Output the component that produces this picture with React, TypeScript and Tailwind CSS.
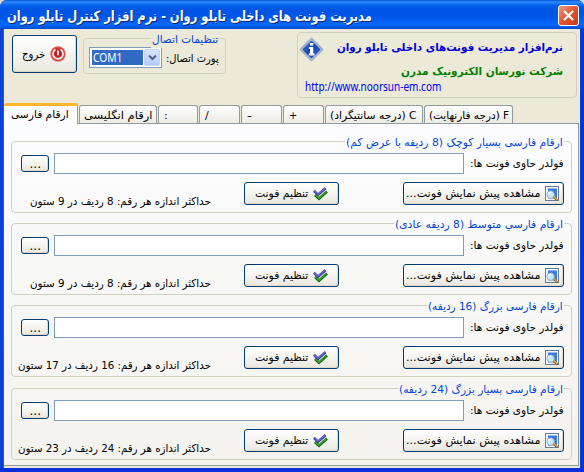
import { useLayoutEffect, useRef, useState, type ReactNode } from 'react';

/* Single line of text condensed or stretched to a fixed width. */
function Fit({ w, className = '', ltr = false, children }: { w: number; className?: string; ltr?: boolean; children: ReactNode }) {
  const ref = useRef<HTMLSpanElement>(null);
  const [scale, setScale] = useState(1);
  useLayoutEffect(() => {
    if (ref.current) setScale(w / ref.current.offsetWidth);
  }, [w]);
  return (
    <span dir="ltr" className={`flex shrink-0 leading-[16px] ${className}`} style={{ width: w }}>
      <span ref={ref} dir={ltr ? 'ltr' : 'rtl'} className="block shrink-0 origin-left whitespace-nowrap" style={{ transform: `scaleX(${scale})` }}>
        {children}
      </span>
    </span>
  );
}

function PowerIcon() {
  return (
    <svg width="16" height="16" viewBox="0 0 16 16" className="shrink-0">
      <defs>
        <radialGradient id="power" cx=".5" cy=".5">
          <stop stopColor="#b81c1c" />
          <stop offset=".65" stopColor="#cc2a28" />
          <stop offset="1" stopColor="#e0645c" />
        </radialGradient>
      </defs>
      <circle cx="8" cy="8" r="7.7" fill="url(#power)" />
      <path d="M5.4 3.6a5 5 0 1 0 5.2 0" fill="none" stroke="#fbeeee" strokeWidth="1.7" />
      <path d="M8 4.5v4.8" stroke="#fff" strokeWidth="1.8" />
    </svg>
  );
}

function InfoIcon() {
  return (
    <svg width="25" height="25" viewBox="0 0 25 25" className="shrink-0">
      <defs>
        <linearGradient id="info" x2="1" y2="1">
          <stop stopColor="#3f74cc" />
          <stop offset=".5" stopColor="#1546b0" />
          <stop offset="1" stopColor="#2a66cc" />
        </linearGradient>
      </defs>
      <path d="M12.5 1.6 23.4 12.5 12.5 23.4 1.6 12.5z" fill="#eef2fa" stroke="#a4aec4" strokeWidth="2" strokeLinejoin="round" />
      <path d="M12.5 4.6 20.4 12.5 12.5 20.4 4.6 12.5z" fill="url(#info)" stroke="url(#info)" strokeWidth="2" strokeLinejoin="round" />
      <path d="M11 6h3.3v2.5H11zM10 10h4.3v6.5h1.3v2H9.8v-2H11v-4.5h-1z" fill="#fff" />
    </svg>
  );
}

function ChecksIcon() {
  return (
    <svg width="15" height="14" viewBox="0 0 15 14" className="shrink-0">
      <path d="M1 3.8 5 7.8 12.5 1.2" fill="none" stroke="#3a3698" strokeWidth="2.6" />
      <path d="M1 3.4 5 7.2 12.4.9" fill="none" stroke="#6664d0" strokeWidth="1.5" />
      <path d="M2 8 6 11.8 14 4.5" fill="none" stroke="#14600f" strokeWidth="2.6" />
      <path d="M2 7.7 6 11.2 13.7 4.3" fill="none" stroke="#31a52c" strokeWidth="1.4" />
    </svg>
  );
}

function PreviewIcon() {
  return (
    <svg width="15" height="16" viewBox="0 0 15 16" className="shrink-0">
      <rect x=".5" y=".5" width="13" height="14" fill="#f4f8ff" stroke="#647c9e" />
      <rect x="3" y="2.5" width="9" height="10" fill="#397be0" />
      <path d="M8.5 10.5 12.5 14.5" stroke="#8a5a18" strokeWidth="2.4" />
      <path d="M8.5 10 12.5 14" stroke="#e8a243" strokeWidth="1.3" />
      <circle cx="5.6" cy="8.6" r="3.7" fill="#c7eafa" stroke="#93abc4" strokeWidth=".9" />
      <path d="M3.6 8a2.3 2.3 0 0 1 2.8-1.8" fill="none" stroke="#fff" strokeWidth="1.3" />
    </svg>
  );
}

const button =
  'flex shrink-0 items-center rounded-[3px] border border-[#003c74] bg-linear-to-b from-white via-[#f5f4ef] to-[#eae7de] shadow-[inset_-1px_-1px_0_#dcd7cb]';

const tabs = [
  { text: 'ارقام انگلیسی', box: 'w-[78px] pl-[4px]', w: 68 },
  { text: ':', box: 'w-[40px] pl-[5px]', w: 4 },
  { text: '/', box: 'w-[41px] pl-[5px]', w: 4 },
  { text: '-', box: 'w-[41px] pl-[5px]', w: 5 },
  { text: '+', box: 'w-[41px] pl-[5px]', w: 8 },
  { text: 'C (درجه سانتیگراد)', box: 'w-[98px] pl-[4px]', w: 87, latin: true },
  { text: 'F (درجه فارنهایت)', box: 'w-[89px] pl-[4px]', w: 80, latin: true },
];

const groups = [
  { title: 'ارقام فارسی بسیار کوچک (8 ردیفه با عرض کم)', w: 217, size: 'حداکثر اندازه هر رقم: 8 ردیف در 9 ستون', sw: 181, gap: 'mb-[10px]', bg: 'bg-[#fbfbfd]' },
  { title: 'ارقام فارسي متوسط (8 ردیفه عادی)', w: 168, size: 'حداکثر اندازه هر رقم: 8 ردیف در 9 ستون', sw: 181, gap: 'mb-[10px]', bg: 'bg-[#fafafa]' },
  { title: 'ارقام فارسی بزرگ (16 ردیفه)', w: 135, size: 'حداکثر اندازه هر رقم: 16 ردیف در 17 ستون', sw: 193, gap: 'mb-[11px]', bg: 'bg-[#f8f8f6]' },
  { title: 'ارقام فارسی بسیار بزرگ (24 ردیفه)', w: 164, size: 'حداکثر اندازه هر رقم: 24 ردیف در 23 ستون', sw: 193, gap: '', bg: 'bg-[#f6f5f1]' },
];

function FontGroup({ g }: { g: (typeof groups)[number] }) {
  return (
    <section className={`relative h-[72px] w-[561px] shrink-0 rounded-[4px] border border-[#d0d0bf] ${g.gap}`}>
      <div className={`absolute -top-[7px] right-[7px] px-[1px] text-[#0046d5] ${g.bg}`}>
        <Fit w={g.w}>{g.title}</Fit>
      </div>
      <div className="mt-[11px] flex h-[21px] items-center pl-[9px]">
        <button className={`${button} mr-[5px] h-[17px] w-[28px] justify-center`}>
          <Fit w={11} ltr className="text-[12px]">...</Fit>
        </button>
        <input className="h-[21px] w-[410px] border border-[#7f9db9] bg-white outline-none" />
        <Fit w={94} className="ml-[6px]">فولدر حاوی فونت ها:</Fit>
      </div>
      <div className="mt-[8px] flex h-[23px] items-center">
        <div className="flex w-[232px] justify-end pr-[33px] pt-[16px]">
          <Fit w={g.sw}>{g.size}</Fit>
        </div>
        <button className={`${button} mr-[64px] h-[23px] w-[95px] gap-[5px] pl-[10px]`}>
          <Fit w={53}>تنظیم فونت</Fit>
          <ChecksIcon />
        </button>
        <button className={`${button} h-[23px] w-[161px] gap-[5px] pl-[2px]`}>
          <Fit w={134}>مشاهده پیش نمایش فونت...</Fit>
          <PreviewIcon />
        </button>
      </div>
    </section>
  );
}

export default function App() {
  return (
    <div className="h-[472px] w-[584px] overflow-hidden bg-[#d9d6ca] font-['DejaVu_Sans',sans-serif] text-[11px] text-black">
      <div className="flex h-full flex-col overflow-hidden rounded-t-[7px] bg-[#0831d9]">
        <header className="flex h-[29px] shrink-0 items-center justify-between bg-[linear-gradient(180deg,#0850d0_0%,#2c8cff_7%,#0562ee_18%,#0054e3_35%,#0057e8_60%,#0668ff_85%,#005bed_93%,#0042c0_100%)] pl-[7px] pr-[5px]">
          <Fit w={365} className="pt-[2px] text-[14px] font-bold text-white [text-shadow:1px_1px_0_#0a246a]">
            مدیریت فونت های داخلی تابلو روان - نرم افزار کنترل تابلو روان
          </Fit>
          <button className="mt-[2px] flex size-[21px] items-center justify-center rounded-[3px] border border-white bg-linear-to-br from-[#f0987c] via-[#e1542d] to-[#c43a17]">
            <svg width="13" height="13" viewBox="0 0 13 13">
              <path d="M2 2 11 11M11 2 2 11" stroke="#fff" strokeWidth="2.2" />
            </svg>
          </button>
        </header>

        <main className="mx-[4px] flex h-[439px] w-[576px] shrink-0 flex-col bg-[#ece9d8] shadow-[-1px_0_0_#1660e8,-4px_0_0_#0840d8,1px_0_0_#0840d8]">
          <div className="flex h-[74px] shrink-0 items-start pl-[8px]">
            <button className={`${button} mr-[6px] mt-[6px] h-[38px] w-[65px] gap-[5px] pl-[9px]`}>
              <Fit w={23} className="pt-[2px]">خروج</Fit>
              <PowerIcon />
            </button>

            <section className="relative mt-[9px] h-[36px] w-[143px] shrink-0 rounded-[4px] border border-[#d0d0bf]">
              <div className="absolute -top-[7px] right-[6px] bg-[#ece9d8] px-[1px] text-[#0046d5]">
                <Fit w={66}>تنظیمات اتصال</Fit>
              </div>
              <div className="mt-[8px] flex items-center pl-[5px]">
                <div className="flex h-[21px] w-[73px] shrink-0 items-center justify-between border border-[#7f9db9] bg-white p-px">
                  <div className="ml-px flex h-[15px] w-[51px] items-center bg-[#316ac5] pl-px text-white">
                    <Fit w={29} ltr className="font-['Noto_Sans'] text-[12px]">COM1</Fit>
                  </div>
                  <div className="flex h-[17px] w-[16px] items-center justify-center rounded-[2px] border border-[#c4d2f5] bg-linear-to-b from-[#dbe6fe] to-[#b5caf8]">
                    <svg width="9" height="7" viewBox="0 0 9 7">
                      <path d="m1 1.5 3.5 3.5L8 1.5" fill="none" stroke="#4d6185" strokeWidth="2" />
                    </svg>
                  </div>
                </div>
                <Fit w={53} className="ml-[4px] pt-[2px]">پورت اتصال:</Fit>
              </div>
            </section>

            <section className="ml-[71px] mt-[3px] flex h-[66px] w-[280px] shrink-0 rounded-[4px] border border-[#d0d0bf] pl-[1px]">
              <div className="w-0 pt-[4px]">
                <InfoIcon />
              </div>
              <div className="flex w-[264px] flex-col items-end pt-[7px] text-[#0000e0]">
                <Fit w={226} className="font-bold">نرم‌افزار مدیریت فونت‌های داخلی تابلو روان</Fit>
                <Fit w={162} className="mt-[8px] font-bold text-[#008000]">شرکت نورسان الکترونیک مدرن</Fit>
                <Fit w={136} ltr className="mr-[122px] -mt-px font-['Noto_Sans'] text-[12px] text-[#0000ff]">http://www.noorsun-em.com</Fit>
              </div>
            </section>
          </div>

          <nav className="flex h-[20px] shrink-0 items-end gap-px">
            <div className="relative z-10 -mb-px flex h-[21px] w-[74px] shrink-0 items-center rounded-t-[3px] border-r border-t-[3px] border-r-[#919b9c] border-t-[#ffb62e] bg-[#fcfcfe] pl-[7px]">
              <Fit w={58}>ارقام فارسی</Fit>
            </div>
            {tabs.map((t) => (
              <div key={t.text} className={`flex h-[18px] shrink-0 items-center rounded-t-[3px] border border-b-0 border-[#919b9c] bg-linear-to-b from-white to-[#ecebe4] pt-[3px] ${t.box}`}>
                <Fit w={t.w} ltr={t.w < 10}>
                  {t.latin ? <bdi dir="rtl">{t.text}</bdi> : t.text}
                </Fit>
              </div>
            ))}
          </nav>

          <div className="flex h-[343px] w-[575px] shrink-0 flex-col border border-l-0 border-[#919b9c] bg-linear-to-b from-[#fcfcfe] to-[#f4f3ee] pl-[7px] pt-[17px]">
            {groups.map((g) => (
              <FontGroup key={g.title} g={g} />
            ))}
          </div>
        </main>
      </div>
    </div>
  );
}
